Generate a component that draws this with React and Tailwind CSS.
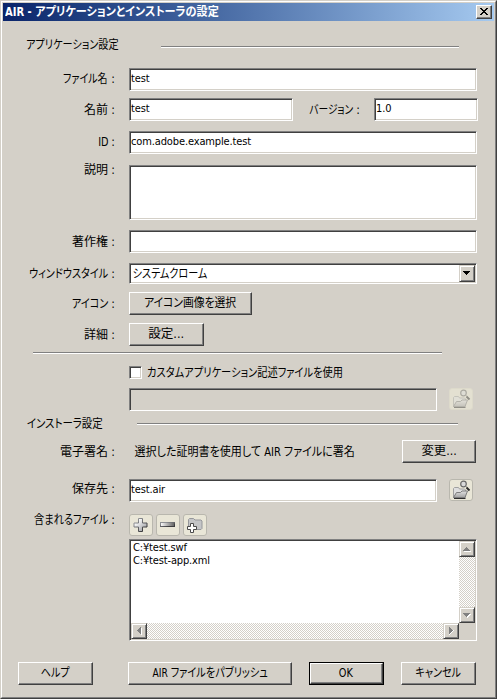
import { clsx } from 'clsx'

const SUNKEN =
  'border border-t-[#808080] border-l-[#808080] border-r-white border-b-white shadow-[inset_1px_1px_0_#404040,inset_-1px_-1px_0_#d4d0c8]'
const RAISED =
  'border border-t-white border-l-white border-r-[#404040] border-b-[#404040] shadow-[inset_-1px_-1px_0_#808080]'
const SMALL_RAISED =
  'border border-t-[#d4d0c8] border-l-[#d4d0c8] border-r-[#404040] border-b-[#404040] shadow-[inset_1px_1px_0_#fff,inset_-1px_-1px_0_#808080]'
const TRACK =
  'bg-[repeating-conic-gradient(#fff_0_25%,#d4d0c8_0_50%)] bg-[length:2px_2px]'

// Right-aligned row label followed by its colon
function Label({ children, className = 'leading-[22px]', textClass }) {
  return (
    <div className={clsx('flex w-[126px] shrink-0 justify-end pr-[14px]', className)}>
      <span className={clsx('origin-right', textClass)}>{children}</span>
      <span className="w-[7px] text-right">:</span>
    </div>
  )
}

function Field({ value, className, disabled }) {
  return (
    <div
      className={clsx(
        'h-[23px] pl-px text-[11px] leading-[19px] tracking-[-0.13px]',
        disabled
          ? 'border border-t-[#808080] border-l-[#808080] border-r-white border-b-white bg-[#d4d0c8] shadow-[inset_1px_1px_0_#404040]'
          : SUNKEN,
        !disabled && 'bg-white',
        className
      )}
    >
      {value}
    </div>
  )
}

function Button({ children, className, textClass }) {
  return (
    <button
      className={clsx(
        'flex h-[23px] shrink-0 items-center justify-center whitespace-nowrap bg-[#d4d0c8]',
        RAISED,
        className
      )}
    >
      <span className={clsx('-mt-px', textClass)}>{children}</span>
    </button>
  )
}

// Section rule: dark line with a light one below it
function Rule({ className }) {
  return <div className={clsx('h-[2px] border-t border-b border-t-[#808080] border-b-white', className)} />
}

function ToolButton({ children, disabled }) {
  return (
    <button
      className={clsx(
        'h-[22px] w-[24px] shrink-0 rounded-[3px] border',
        disabled ? 'border-[#dddacb] bg-[#e3e0d1]' : 'border-[#b9b7ae] bg-[#e9e6d7]'
      )}
    >
      <svg width="22" height="20" viewBox="0 0 22 20" className={disabled ? 'opacity-45' : ''}>
        <defs>
          <linearGradient id="metal" x1="0" y1="0" x2="1" y2="1">
            <stop offset="0.2" stopColor="#ffffff" />
            <stop offset="1" stopColor="#8c8e92" />
          </linearGradient>
          <linearGradient id="edge" x1="0" y1="0" x2="1" y2="1">
            <stop offset="0.2" stopColor="#8d8f93" />
            <stop offset="0.8" stopColor="#3c3c3e" />
          </linearGradient>
          <linearGradient id="folder" x1="0" y1="0" x2="0" y2="1">
            <stop offset="0" stopColor="#e2e2e2" />
            <stop offset="1" stopColor="#a2a2a2" />
          </linearGradient>
          <linearGradient id="bar" x1="0" y1="0" x2="1" y2="0">
            <stop offset="0" stopColor="#ffffff" />
            <stop offset="1" stopColor="#606060" />
          </linearGradient>
        </defs>
        {children}
      </svg>
    </button>
  )
}

function BrowseIcon() {
  return (
    <>
      <path d="M3.500 17.500v-9l1-1h4l1 1.500h5l1 1v7.500z" fill="#dedede" stroke="#a0a0a0" />
      <path d="M3.500 17.500l3-5h4l1.500-1.500h5.500l-2.500 6.500z" fill="url(#folder)" stroke="#7d7d7d" />
      <path d="M4 18.500h11.500" stroke="#2f2f2f" />
      <circle cx="13.500" cy="4" r="2.800" fill="#dadada" stroke="#6a6a6a" strokeWidth="1.200" />
      <path d="M15.500 6l1.500 1.500" stroke="#6e6e6e" />
      <path d="M16.500 7.500l3 3" stroke="#292929" strokeWidth="1.800" />
    </>
  )
}

function ScrollButton({ d, shadow }) {
  return (
    <div className={clsx('h-[16px] w-[16px] shrink-0 bg-[#d4d0c8]', SMALL_RAISED)}>
      <svg width="14" height="14" viewBox="0 0 14 14" shapeRendering="crispEdges">
        <path d={shadow} fill="#fff" />
        <path d={d} fill="#808080" />
      </svg>
    </div>
  )
}

function TitleBar() {
  return (
    <div className="flex h-[18px] items-center justify-between bg-linear-to-r from-[#0a246a] to-[#a6caf0] pr-[2px] pl-[2px]">
      <span className="origin-left scale-x-[.925] text-[12px] font-bold leading-[18px] text-white">
        AIR - アプリケーションとインストーラの設定
      </span>
      <button className={clsx('h-[14px] w-[16px] bg-[#d4d0c8]', RAISED)}>
        <svg width="14" height="12" viewBox="0 0 14 12" shapeRendering="crispEdges">
          <path
            d="M3 2h2v1h1v1h2v-1h1v-1h2v1h-1v1h-1v1h-1v1h1v1h1v1h1v1h-2v-1h-1v-1h-2v1h-1v1h-2v-1h1v-1h1v-1h1v-1h-1v-1h-1v-1h-1z"
            fill="#000"
          />
        </svg>
      </button>
    </div>
  )
}

const files = ['C:¥test.swf', 'C:¥test-app.xml']

function FileList() {
  return (
    <div className={clsx('flex h-[102px] w-[348px] flex-col bg-white p-px', SUNKEN)}>
      <div className="flex h-[82px]">
        <div className="flex-1 pl-[2px] text-[11px] leading-[13px] tracking-[-0.15px]">
          {files.map((f) => (
            <div key={f}>{f}</div>
          ))}
        </div>
        <div className={clsx('flex w-[16px] flex-col justify-between', TRACK)}>
          <ScrollButton d="M6 5h1v1h1v1h1v1h1v1h-7v-1h1v-1h1v-1h1z" shadow="M4 9h7v1h-7z" />
          <ScrollButton d="M3 5h7v1h-1v1h-1v1h-1v1h-1v-1h-1v-1h-1v-1h-1z" shadow="M10 6h1v1h-1v1h-1v1h-1v1h-1v-2h1v-1h1v-1h1z" />
        </div>
      </div>
      <div className="flex h-[16px] bg-[#d4d0c8]">
        <div className={clsx('flex w-[328px] justify-between', TRACK)}>
          <ScrollButton d="M8 3h1v7h-1v-1h-1v-1h-1v-1h-1v-1h1v-1h1v-1h1z" shadow="M9 4h1v7h-1z" />
          <ScrollButton d="M5 3h1v1h1v1h1v1h1v1h-1v1h-1v1h-1v1h-1z" shadow="M9 6h1v1h-1v1h-1v1h-1v1h-1v1h-1v-2h1v-1h1v-1h1z" />
        </div>
      </div>
    </div>
  )
}

export default function App() {
  return (
    <div className="h-[699px] w-[497px] overflow-hidden border border-t-[#d4d0c8] border-l-[#d4d0c8] border-r-[#404040] border-b-[#404040] bg-[#d4d0c8] font-['DejaVu_Sans_Condensed','Noto_Sans_CJK_JP',sans-serif] text-[12px] whitespace-nowrap text-black [font-feature-settings:'palt']">
      <div className="h-full border border-t-white border-l-white border-r-[#808080] border-b-[#808080] p-px">
        <TitleBar />

        <div className="flex h-[47px] pt-[14px] pl-[23px]">
          <span className="w-[135px] origin-left scale-x-[.845] leading-[21px]">アプリケーション設定</span>
          <Rule className="mt-[11px] w-[298px]" />
        </div>

        <div className="flex h-[30px]">
          <Label textClass="scale-x-[.83]">ファイル名</Label>
          <Field value="test" className="w-[348px]" />
        </div>
        <div className="flex h-[33px]">
          <Label className="leading-[24px]">名前</Label>
          <Field value="test" className="w-[164px]" />
          <div className="flex w-[81px] justify-end pr-[14px] leading-[24px]">
            <span className="origin-right scale-x-[.81]">バージョン</span>
            <span className="w-[7px] text-right">:</span>
          </div>
          <Field value="1.0" className="w-[104px]" />
        </div>
        <div className="flex h-[34px]">
          <Label textClass="scale-x-90">ID</Label>
          <Field value="com.adobe.example.test" className="w-[348px]" />
        </div>
        <div className="flex h-[65px]">
          <Label className="leading-[11px]">説明</Label>
          <div className={clsx('h-[55px] w-[348px] bg-white', SUNKEN)} />
        </div>
        <div className="flex h-[33px]">
          <Label className="leading-[24px]">著作権</Label>
          <Field className="w-[348px]" />
        </div>
        <div className="flex h-[29px]">
          <Label textClass="scale-x-[.84]">ウィンドウスタイル</Label>
          <div className={clsx('flex h-[21px] w-[348px] justify-between bg-white p-px', SUNKEN)}>
            <span className="origin-left scale-x-[.84] pl-[2px] leading-[19px]">システムクローム</span>
            <div className={clsx('h-[17px] w-[16px] bg-[#d4d0c8]', SMALL_RAISED)}>
              <svg width="14" height="15" viewBox="0 0 14 15" shapeRendering="crispEdges">
                <path d="M3 5h7v1h-1v1h-1v1h-1v1h-1v-1h-1v-1h-1v-1h-1z" fill="#000" />
              </svg>
            </div>
          </div>
        </div>
        <div className="flex h-[31px]">
          <Label className="leading-[24px]" textClass="scale-x-[.84]">
            アイコン
          </Label>
          <Button className="w-[123px]" textClass="scale-x-90">
            アイコン画像を選択
          </Button>
        </div>
        <div className="flex h-[29px]">
          <Label className="leading-[25px]">詳細</Label>
          <Button className="w-[75px]" textClass="scale-x-105">
            設定...
          </Button>
        </div>
        <Rule className="ml-[30px] w-[409px]" />

        <div className="mt-[12px] flex h-[22px] pl-[126px]">
          <div className={clsx('h-[13px] w-[13px] bg-white', SUNKEN)} />
          <span className="-mt-[3px] ml-[5px] origin-left scale-x-[.853] leading-[20px]">
            カスタムアプリケーション記述ファイルを使用
          </span>
        </div>
        <div className="flex h-[25px] pl-[126px]">
          <Field disabled className="mr-[12px] w-[308px]" />
          <ToolButton disabled>
            <BrowseIcon />
          </ToolButton>
        </div>

        <div className="flex h-[27px] pl-[23px]">
          <span className="w-[111px] origin-left scale-x-[.87] pl-px leading-[23px]">インストーラ設定</span>
          <Rule className="mt-[10px] w-[321px]" />
        </div>
        <div className="flex h-[39px]">
          <Label className="leading-[24px]">電子署名</Label>
          <span className="w-[267px] origin-left scale-x-[.92] pl-[6px] leading-[24px]">
            選択した証明書を使用して AIR ファイルに署名
          </span>
          <Button className="ml-[6px] w-[74px]" textClass="scale-x-[1.03]">
            変更...
          </Button>
        </div>
        <div className="flex h-[35px]">
          <Label className="leading-[21px]">保存先</Label>
          <Field value="test.air" className="mr-[12px] w-[308px]" />
          <ToolButton>
            <BrowseIcon />
          </ToolButton>
        </div>
        <div className="flex h-[25px]">
          <Label className="leading-[13px]" textClass="scale-x-[.85]">
            含まれるファイル
          </Label>
          <div className="flex gap-[3px]">
            <ToolButton>
              <path d="M8.500 3.500h4v4.500h4.500v4h-4.500v4.500h-4v-4.500h-4.500v-4h4.500z" fill="url(#metal)" stroke="url(#edge)" />
            </ToolButton>
            <ToolButton>
              <rect x="3.500" y="7.500" width="14" height="4" fill="url(#bar)" stroke="url(#edge)" />
            </ToolButton>
            <ToolButton>
              <path d="M4.500 13.500v-9l1-1h4l1.500 1.500h6l1 1v7.500l-1 1h-12.500z" fill="#c4c5c7" stroke="#96979b" />
              <path d="M6.500 8.500h3v3h3v3h-3v3h-3v-3h-3v-3h3z" fill="#fff" stroke="#4a4a4a" />
            </ToolButton>
          </div>
        </div>
        <div className="pl-[126px]">
          <FileList />
        </div>

        <div className="mt-[21px] flex pl-[15px]">
          <Button className="w-[75px]" textClass="scale-x-[.84]">
            ヘルプ
          </Button>
          <Button className="ml-[35px] w-[164px]" textClass="scale-x-[.845]">
            AIR ファイルをパブリッシュ
          </Button>
          <div className="ml-[17px] h-[23px] w-[75px] border border-black">
            <Button className="h-[21px]! w-[73px]" textClass="scale-x-90 -ml-px">
              OK
            </Button>
          </div>
          <Button className="ml-[17px] w-[75px]" textClass="scale-x-[.84]">
            キャンセル
          </Button>
        </div>
      </div>
    </div>
  )
}
